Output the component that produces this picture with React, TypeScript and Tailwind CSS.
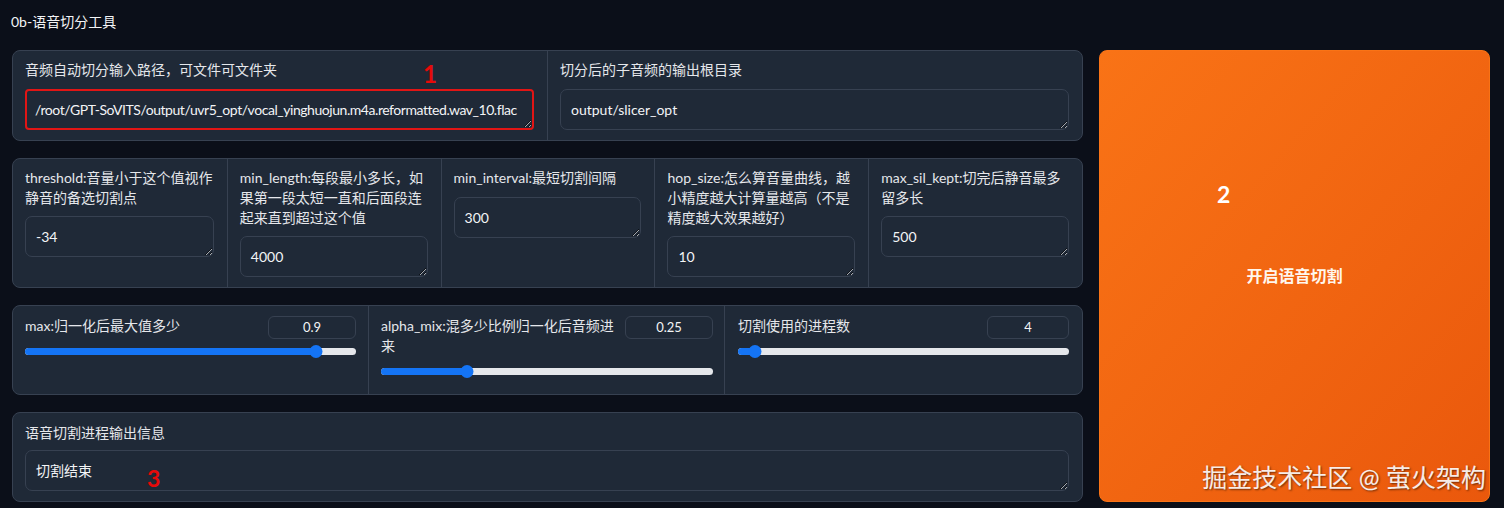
import React from "react";

const FONT = "font-['Lato','Noto_Sans_CJK_SC',sans-serif]";

function Box({
  value,
  className = "",
  red = false,
}: {
  value: string;
  className?: string;
  red?: boolean;
}) {
  return (
    <textarea
      readOnly
      defaultValue={value}
      wrap="off"
      className={`block w-full resize-y overflow-hidden bg-[#1f2937] text-[14px] leading-[20px] text-[#f3f4f6] outline-none ${
        red
          ? "rounded-[4px] border-2 border-[#e11515] px-[8px] py-[9px] tracking-[-0.45px]"
          : "rounded-[7px] border border-[#374151] px-[10px] py-[10px]"
      } ${className}`}
    />
  );
}

function Slider({ fill, left }: { fill: string; left: string }) {
  return (
    <div className="relative h-[14px] w-full">
      <div className="absolute left-0 right-0 top-[4px] h-[7px] rounded-full bg-[#e5e7eb]" />
      <div className={`absolute left-0 top-[4px] h-[7px] rounded-full bg-[#1474f5] ${fill}`} />
      <div
        className={`absolute top-[1px] h-[13px] w-[13px] -translate-x-1/2 rounded-full bg-[#1474f5] ${left}`}
      />
    </div>
  );
}

function NumBox({ v, w }: { v: string; w: string }) {
  return (
    <div
      className={`flex h-[23px] shrink-0 items-center justify-center rounded-[6px] border border-[#374151] bg-[#1f2937] text-[13px] text-[#f3f4f6] ${w}`}
    >
      {v}
    </div>
  );
}

const LABEL = "whitespace-nowrap text-[14px] leading-[20px]";

export default function App() {
  return (
    <div
      className={`relative h-[508px] w-[1504px] overflow-hidden bg-[#0b0f19] ${FONT} text-[#e5e7eb]`}
    >
      <div className="pl-[11px] pt-[12px] text-[14px] leading-[20px] text-[#f3f4f6]">0b-语音切分工具</div>

      <div className="mt-[18px] flex gap-[16px] pl-[12px]">
        {/* left column */}
        <div className="flex w-[1071px] flex-col gap-[17px]">
          {/* row 1 */}
          <div className="flex h-[91px] rounded-[8px] border border-[#374151] bg-[#1f2937]">
            <div className="flex-1 px-[12px] pr-[13px] pt-[9px]">
              <div className={LABEL}>音频自动切分输入路径，可文件可文件夹</div>
              <div className="mt-[9px]">
                <Box
                  red
                  value="/root/GPT-SoVITS/output/uvr5_opt/vocal_yinghuojun.m4a.reformatted.wav_10.flac"
                  className="h-[41px]"
                />
              </div>
            </div>
            <div className="flex-1 border-l border-[#374151] px-[12px] pr-[13px] pt-[9px]">
              <div className={LABEL}>切分后的子音频的输出根目录</div>
              <div className="mt-[9px]">
                <Box value="output/slicer_opt" className="h-[41px]" />
              </div>
            </div>
          </div>

          {/* row 2 */}
          <div className="grid h-[130px] grid-cols-5 rounded-[8px] border border-[#374151] bg-[#1f2937]">
            <div className="px-[12px] pr-[13px] pt-[9px]">
              <div className={LABEL}>
                threshold:音量小于这个值视作
                <br />
                静音的备选切割点
              </div>
              <div className="mt-[8px]">
                <Box value="-34" className="h-[41px]" />
              </div>
            </div>
            <div className="border-l border-[#374151] px-[12px] pr-[13px] pt-[9px]">
              <div className={LABEL}>
                min_length:每段最小多长，如
                <br />
                果第一段太短一直和后面段连
                <br />
                起来直到超过这个值
              </div>
              <div className="mt-[8px]">
                <Box value="4000" className="h-[41px]" />
              </div>
            </div>
            <div className="border-l border-[#374151] px-[12px] pr-[13px] pt-[9px]">
              <div className={LABEL}>min_interval:最短切割间隔</div>
              <div className="mt-[9px]">
                <Box value="300" className="h-[41px]" />
              </div>
            </div>
            <div className="border-l border-[#374151] px-[12px] pr-[13px] pt-[9px]">
              <div className={LABEL}>
                hop_size:怎么算音量曲线，越
                <br />
                小精度越大计算量越高（不是
                <br />
                精度越大效果越好）
              </div>
              <div className="mt-[8px]">
                <Box value="10" className="h-[41px]" />
              </div>
            </div>
            <div className="border-l border-[#374151] px-[12px] pr-[13px] pt-[9px]">
              <div className={LABEL}>
                max_sil_kept:切完后静音最多
                <br />
                留多长
              </div>
              <div className="mt-[8px]">
                <Box value="500" className="h-[41px]" />
              </div>
            </div>
          </div>

          {/* row 3 */}
          <div className="flex h-[90px] rounded-[8px] border border-[#374151] bg-[#1f2937]">
            <div className="w-[355px] px-[12px] pr-[12px] pt-[10px]">
              <div className="flex items-start justify-between gap-[8px]">
                <div className={LABEL}>max:归一化后最大值多少</div>
                <NumBox v="0.9" w="w-[88px]" />
              </div>
              <div className="mt-[5px]">
                <Slider fill="w-[88%]" left="left-[88%]" />
              </div>
            </div>
            <div className="w-[356px] border-l border-[#374151] px-[12px] pr-[11px] pt-[10px]">
              <div className="flex items-start justify-between gap-[8px]">
                <div className={LABEL}>
                  alpha_mix:混多少比例归一化后音频进
                  <br />
                  来
                </div>
                <NumBox v="0.25" w="w-[88px]" />
              </div>
              <div className="mt-[8px]">
                <Slider fill="w-[26%]" left="left-[26%]" />
              </div>
            </div>
            <div className="flex-1 border-l border-[#374151] px-[13px] pr-[13px] pt-[10px]">
              <div className="flex items-start justify-between gap-[8px]">
                <div className={LABEL}>切割使用的进程数</div>
                <NumBox v="4" w="w-[82px]" />
              </div>
              <div className="mt-[5px]">
                <Slider fill="w-[5%]" left="left-[5%]" />
              </div>
            </div>
          </div>

          {/* row 4 */}
          <div className="h-[90px] rounded-[8px] border border-[#374151] bg-[#1f2937] px-[12px] pr-[13px] pt-[10px]">
            <div className={LABEL}>语音切割进程输出信息</div>
            <div className="mt-[7px]">
              <Box value="切割结束" className="h-[41px]" />
            </div>
          </div>
        </div>

        {/* button */}
        <button className="flex h-[452px] w-[391px] items-center justify-center rounded-[8px] border border-[#f97316] bg-gradient-to-br from-[#f97316] to-[#ea580c] text-[16px] font-bold text-[#fff7ed]">
          开启语音切割
        </button>
      </div>

      {/* annotations */}
      <div className="absolute left-[423px] top-[59px] text-[24px] font-bold leading-[30px] text-[#e60a0a]">1</div>
      <div className="absolute left-[1217px] top-[179px] text-[23px] font-bold leading-[30px] text-white">2</div>
      <div className="absolute left-[147px] top-[463px] text-[23px] font-bold leading-[30px] text-[#e60a0a]">3</div>
      <div className="absolute right-[18px] top-[462px] whitespace-nowrap text-[25px] leading-[30px] text-white/90 [text-shadow:1px_1px_2px_rgba(0,0,0,0.55)]">
        掘金技术社区 @ 萤火架构
      </div>
    </div>
  );
}
